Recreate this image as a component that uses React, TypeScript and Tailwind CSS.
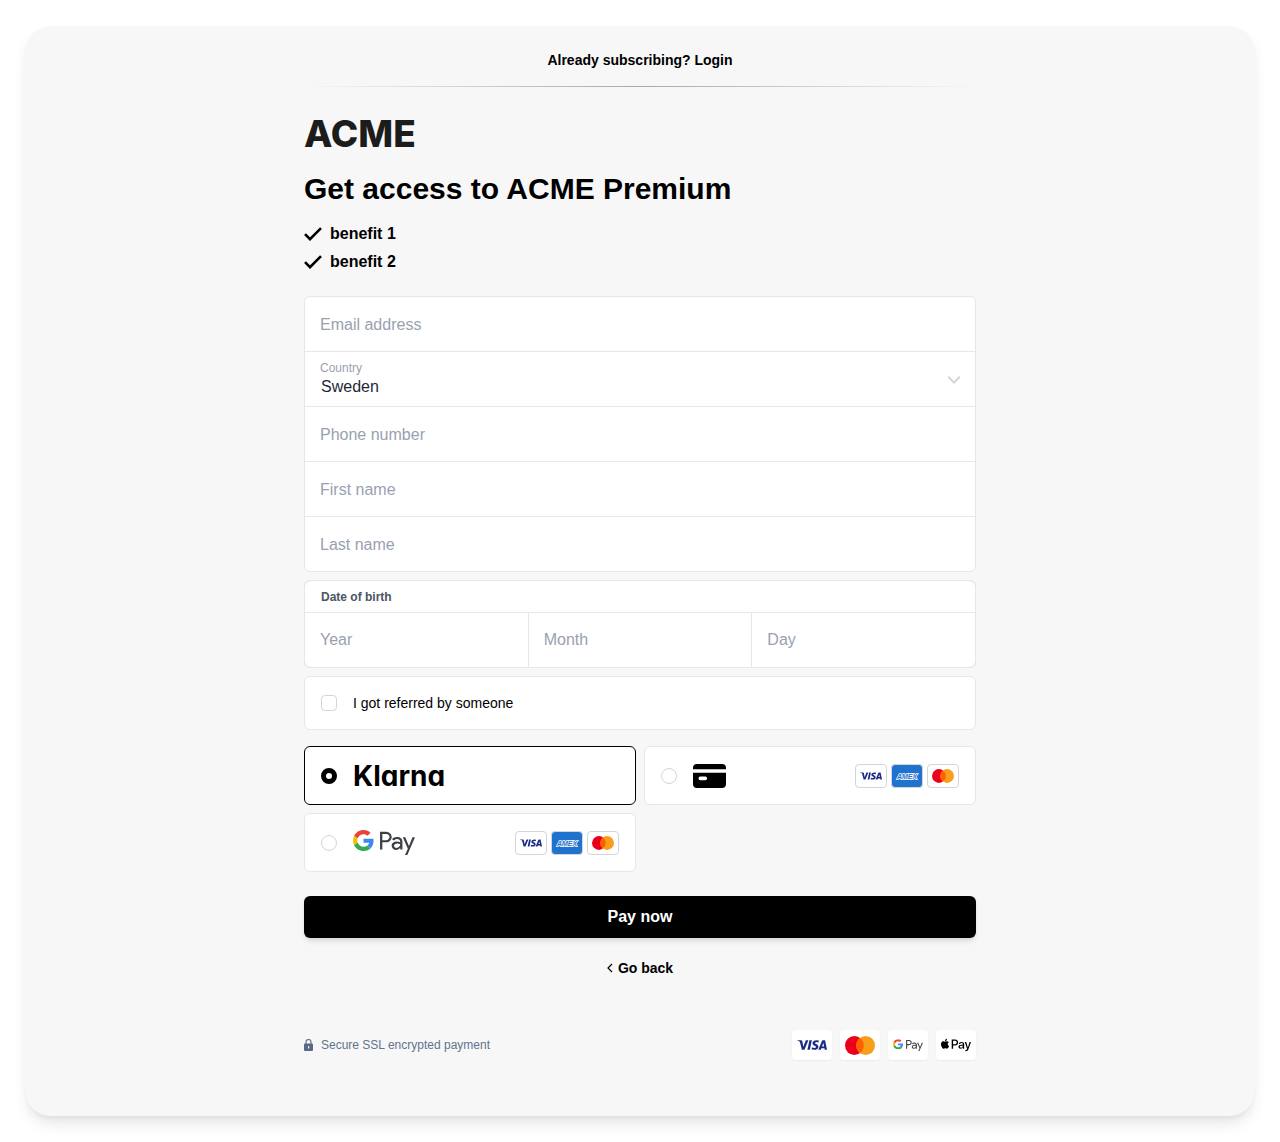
import React from "react";
import { FaApplePay } from "react-icons/fa";
import { SiGooglepay, SiVisa } from "react-icons/si";

function Check() {
  return (
    <svg viewBox="0 0 18 14" className="h-[14px] w-[18px]" aria-hidden="true">
      <path d="M1 7.2 L6 12.2 L17 1.2" fill="none" stroke="#000" strokeWidth="2.6" />
    </svg>
  );
}

function Mastercard({ className }: { className: string }) {
  return (
    <svg viewBox="0 0 30 19" className={className} role="img" aria-label="Mastercard">
      <circle cx="9.4" cy="9.5" r="9.4" fill="#eb001b" />
      <circle cx="20.6" cy="9.5" r="9.4" fill="#f79e1b" />
      <path d="M15 2a9.4 9.4 0 0 1 0 15a9.4 9.4 0 0 1 0-15z" fill="#ff5f00" />
    </svg>
  );
}

function GooglePay({ className }: { className: string }) {
  return (
    <svg viewBox="0 0 62 26" className={className} role="img" aria-label="Google Pay">
      <svg x="0" y="0" width="21" height="21" viewBox="0 0 48 48">
        <path fill="#ea4335" d="M24 9.5c3.54 0 6.71 1.22 9.21 3.6l6.85-6.85C35.9 2.38 30.47 0 24 0 14.62 0 6.51 5.38 2.56 13.22l7.98 6.19C12.43 13.72 17.74 9.5 24 9.5z" />
        <path fill="#4285f4" d="M46.98 24.55c0-1.57-.15-3.09-.38-4.55H24v9.02h12.94c-.58 2.96-2.26 5.48-4.78 7.18l7.73 6c4.51-4.18 7.09-10.36 7.09-17.65z" />
        <path fill="#fbbc05" d="M10.53 28.59c-.48-1.45-.76-2.99-.76-4.59s.27-3.14.76-4.59l-7.98-6.19C.92 16.46 0 20.12 0 24c0 3.88.92 7.54 2.56 10.78l7.97-6.19z" />
        <path fill="#34a853" d="M24 48c6.48 0 11.93-2.13 15.89-5.81l-7.73-6c-2.15 1.45-4.92 2.3-8.16 2.3-6.26 0-11.57-4.22-13.47-9.91l-7.98 6.19C6.51 42.62 14.62 48 24 48z" />
      </svg>
      <svg x="24.3" y="0.2" width="37.7" height="24.8" viewBox="9.4 7.2 14.6 9.6">
        <SiGooglepay size="24" color="#3c4043" />
      </svg>
    </svg>
  );
}

function CardBrands() {
  return (
    <span className="ml-auto flex gap-1">
      <span className="flex h-6 w-8 items-center justify-center rounded border border-gray-300 bg-white">
        <SiVisa className="h-[22px] w-[22px] text-[#1a2a85]" title="Visa" />
      </span>
      <span className="flex h-6 w-8 items-center justify-center rounded border border-gray-300 bg-[#1f72cd]">
        <svg viewBox="0 0 24 8" className="h-2 w-6" role="img" aria-label="Amex">
          <text x="12" y="6.5" textAnchor="middle" fontFamily="Liberation Sans, sans-serif" fontSize="7" fontStyle="italic" fontWeight="700" fill="#1f72cd" stroke="#fff" strokeWidth="1.4" paintOrder="stroke">AMEX</text>
        </svg>
      </span>
      <span className="flex h-6 w-8 items-center justify-center rounded border border-gray-300 bg-white">
        <Mastercard className="h-[14px] w-[22px]" />
      </span>
    </span>
  );
}

function PaymentOption({ id, label, checked, onSelect, children }: { id: string; label: string; checked: boolean; onSelect: () => void; children: React.ReactNode }) {
  return (
    <label className={`flex h-[59px] cursor-pointer items-center rounded-md border bg-white px-4 ${checked ? "border-black" : "border-gray-200"}`}>
      <input
        type="radio"
        name="payment"
        value={id}
        aria-label={label}
        checked={checked}
        onChange={onSelect}
        className="mr-4 size-4 shrink-0 appearance-none rounded-full border border-gray-300 bg-white checked:border-[5px] checked:border-black"
      />
      {children}
    </label>
  );
}

const input = "block h-[54px] w-full min-w-0 bg-white px-[15px] text-base text-gray-800 placeholder:text-gray-400 outline-none";
const field = `${input} pt-0.5`;
const badge = "flex h-[30px] w-10 items-center justify-center rounded bg-white shadow-xs";

export default function App() {
  const [method, setMethod] = React.useState("klarna");
  return (
    <div className="bg-white px-[25px] py-[26px] font-['Liberation_Sans',Arial,sans-serif] text-black">
      <main className="rounded-[26px] bg-[#f7f7f7] pt-6 pb-14 shadow-[0_10px_15px_-3px_rgba(0,0,0,0.1),0_4px_6px_-2px_rgba(0,0,0,0.05)]">
        <form className="mx-auto flex max-w-2xl flex-col" onSubmit={(e) => e.preventDefault()}>
          <a href="#login" className="self-center text-sm font-bold">Already subscribing? Login</a>
          <div className="mt-4 h-px bg-linear-to-r from-transparent via-[#a8a8a8] to-transparent" />

          <div className="mt-8 pt-px font-['Inter',sans-serif] text-[37px] leading-7 font-extrabold text-[#1c1c1c]">ACME</div>
          <h1 className="mt-[23px] text-3xl leading-9 font-bold">Get access to ACME Premium</h1>
          <ul className="mt-[13px] font-bold">
            {["benefit 1", "benefit 2"].map((b) => (
              <li key={b} className="flex items-center gap-2 leading-7"><Check />{b}</li>
            ))}
          </ul>

          <div className="mt-5 grid gap-px overflow-hidden rounded-md border border-gray-200 bg-gray-200">
            <input type="email" aria-label="Email address" placeholder="Email address" className={field} />
            <div className="relative bg-white">
              <label htmlFor="country" className="absolute top-2 left-[15px] text-xs text-gray-400">Country</label>
              <select id="country" defaultValue="Sweden" className="block h-[54px] w-full appearance-none bg-transparent px-4 pt-4 text-base text-gray-800 outline-none">
                <option>Sweden</option>
                <option>Norway</option>
                <option>Denmark</option>
              </select>
              <svg viewBox="0 0 12 8" className="pointer-events-none absolute top-6 right-[15px] h-2 w-3" aria-hidden="true">
                <path d="M0.7 1.2 L6 6.6 L11.3 1.2" fill="none" stroke="#d1d5db" strokeWidth="2" strokeLinecap="round" strokeLinejoin="round" />
              </svg>
            </div>
            <input type="tel" aria-label="Phone number" placeholder="Phone number" className={field} />
            <input type="text" aria-label="First name" placeholder="First name" className={field} />
            <input type="text" aria-label="Last name" placeholder="Last name" className={field} />
          </div>

          <fieldset className="mt-2 grid grid-cols-3 gap-px overflow-hidden rounded-md border border-gray-200 bg-gray-200" aria-labelledby="dob">
            <div id="dob" className="col-span-3 bg-white px-4 pt-0.5 text-xs leading-[29px] font-bold text-gray-600">Date of birth</div>
            <input type="text" aria-label="Year" placeholder="Year" className={input} />
            <input type="text" aria-label="Month" placeholder="Month" className={input} />
            <input type="text" aria-label="Day" placeholder="Day" className={input} />
          </fieldset>

          <label className="mt-2 flex h-[54px] items-center gap-4 rounded-md border border-gray-200 bg-white px-4 text-sm">
            <input type="checkbox" className="size-4 appearance-none rounded border border-gray-300 bg-white checked:bg-black" />
            I got referred by someone
          </label>

          <div className="mt-4 grid grid-cols-2 gap-2">
            <PaymentOption id="klarna" label="Klarna" checked={method === "klarna"} onSelect={() => setMethod("klarna")}>
              <span className="font-['Inter',sans-serif] text-[28px] leading-8 font-bold [font-feature-settings:'cv11']">Klarna</span>
            </PaymentOption>
            <PaymentOption id="card" label="Card" checked={method === "card"} onSelect={() => setMethod("card")}>
              <svg viewBox="0 0 33 24" className="h-6 w-[33px]" aria-hidden="true">
                <path d="M4 0h25a4 4 0 0 1 4 4v1.3H0V4a4 4 0 0 1 4-4z" />
                <path fillRule="evenodd" d="M0 8.8h33V20a4 4 0 0 1-4 4H4a4 4 0 0 1-4-4zM7.3 12.6a1.8 1.8 0 0 0 0 3.6h5a1.8 1.8 0 0 0 0-3.6z" />
              </svg>
              <CardBrands />
            </PaymentOption>
            <PaymentOption id="gpay" label="Google Pay" checked={method === "gpay"} onSelect={() => setMethod("gpay")}>
              <GooglePay className="h-[26px] w-[62px]" />
              <CardBrands />
            </PaymentOption>
          </div>

          <button type="submit" className="mt-6 h-[42px] rounded-md bg-black text-base font-bold text-white shadow-md">Pay now</button>

          <button type="button" className="mt-5 flex items-center gap-[5px] self-center text-sm font-bold">
            <svg viewBox="0 0 6 10" className="h-[10px] w-[6px]" aria-hidden="true">
              <path d="M5 1 L1 5 L5 9" fill="none" stroke="#000" strokeWidth="1.2" />
            </svg>
            Go back
          </button>

          <footer className="mt-[52px] flex items-center justify-between">
            <div className="flex items-center gap-2 text-xs text-slate-500">
              <svg viewBox="0 0 9 12" className="h-3 w-[9px]" aria-hidden="true">
                <path d="M2 5V3a2.5 2.5 0 0 1 5 0v2" fill="none" stroke="#64748b" strokeWidth="1.2" />
                <rect y="4.6" width="9" height="7.4" rx="1" fill="#5b6885" />
                <rect x="4" y="7" width="1.2" height="2.6" rx="0.6" fill="#fff" />
              </svg>
              Secure SSL encrypted payment
            </div>
            <div className="flex gap-2">
              <span className={badge}><SiVisa className="h-[30px] w-[30px] text-[#1a2a85]" title="Visa" /></span>
              <span className={badge}><Mastercard className="h-[19px] w-[30px]" /></span>
              <span className={badge}><GooglePay className="h-[13px] w-[30px]" /></span>
              <span className={badge}><FaApplePay className="h-[26px] w-[30px]" title="Apple Pay" /></span>
            </div>
          </footer>
        </form>
      </main>
    </div>
  );
}
